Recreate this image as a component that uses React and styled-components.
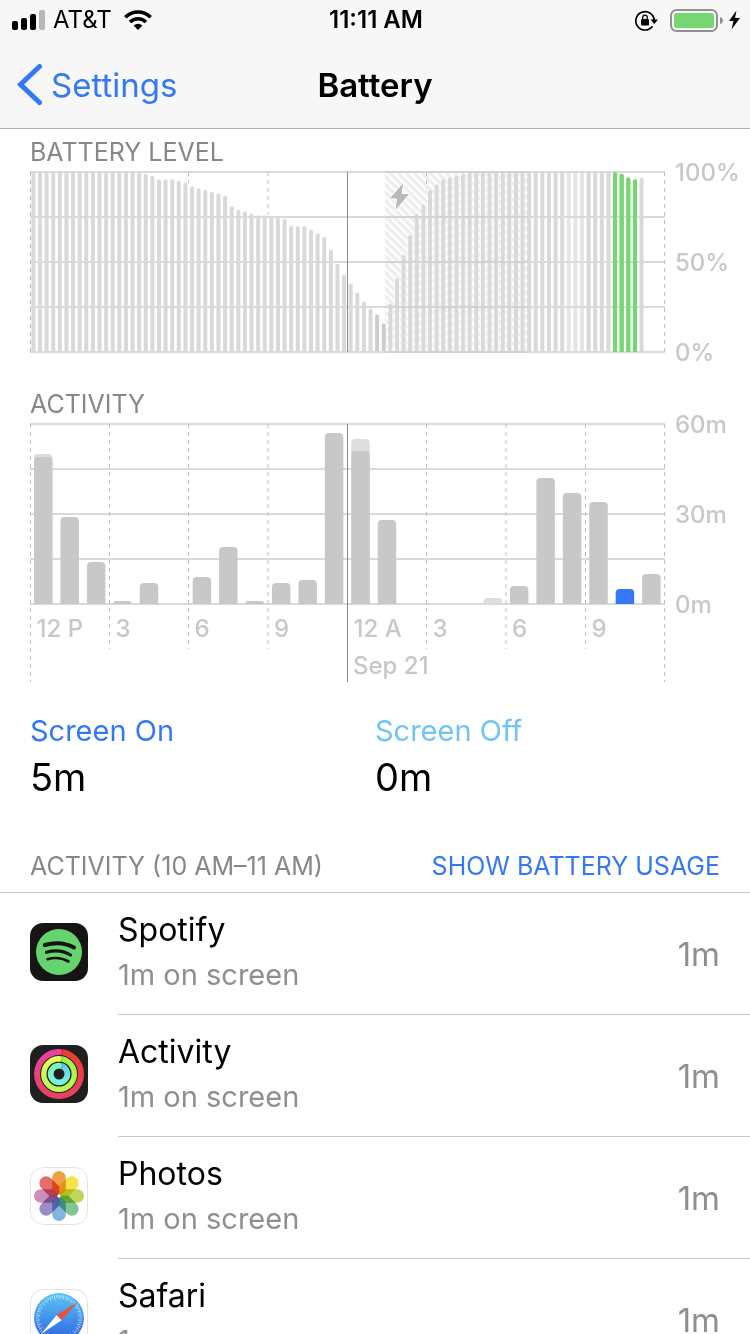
import React from 'react';
import styled, { createGlobalStyle } from 'styled-components';

const GlobalStyle = createGlobalStyle`
  * {
    box-sizing: border-box;
  }
  html {
    scrollbar-width: none;
  }
  body {
    margin: 0;
    background: #fff;
    color: #000;
    font-family: Inter, "Liberation Sans", sans-serif;
  }
`;

const Header = styled.header`
  background: #f7f7f7;
  border-bottom: 1px solid #b2b2b2;
`;

const StatusBar = styled.div`
  display: grid;
  grid-template-columns: 1fr auto 1fr;
  align-items: center;
  height: 40px;
  padding: 0 10px 0 12px;
  font-size: 24px;
  line-height: 28px;
`;

const StatusGroup = styled.div`
  display: flex;
  align-items: center;
  justify-content: ${props => props.$end ? 'flex-end' : 'flex-start'};
  gap: ${props => props.$gap}px;
`;

const Clock = styled.span`
  font-weight: 600;
`;

const NavBar = styled.nav`
  display: grid;
  grid-template-columns: 1fr auto 1fr;
  align-items: center;
  height: 88px;
  padding: 2px 16px 0;
`;

const BackLink = styled.a`
  display: flex;
  align-items: center;
  gap: 8px;
  color: #3478f6;
  font-size: 33px;
  line-height: 40px;
  text-decoration: none;
`;

const Title = styled.h1`
  margin: 0;
  font-size: 33px;
  line-height: 40px;
  font-weight: 600;
`;

const Section = styled.section`
  padding: ${props => props.$top}px 0 0 30px;
`;

const Label = styled.h2`
  margin: 0;
  color: #86868b;
  font-size: 25px;
  line-height: 32px;
  font-weight: 400;
`;

const ChartSvg = styled.svg`
  display: block;
  width: 100%;
  height: auto;
  margin-top: 3px;
  overflow: visible;

  text {
    fill: #c7c7cc;
    font-size: 24px;
    font-weight: 500;
  }
`;

const Totals = styled.dl`
  display: grid;
  grid-template-columns: 345px 1fr;
  margin: 0;
  padding: 26px 30px 0;
`;

const TotalName = styled.dt`
  color: ${props => props.$color};
  font-size: 29px;
  line-height: 44px;
`;

const TotalValue = styled.dd`
  margin: 0;
  font-size: 38px;
  line-height: 48px;
`;

const ListHeader = styled.div`
  display: flex;
  align-items: center;
  justify-content: space-between;
  padding: 49px 30px 10px;
  border-bottom: 1px solid #c8c7cc;
`;

const UsageButton = styled.button`
  padding: 0;
  border: 0;
  background: none;
  color: #3478f6;
  font-family: inherit;
  font-size: 25px;
  line-height: 32px;
`;

const AppList = styled.ul`
  margin: 0;
  padding: 0 0 0 30px;
  list-style: none;
`;

const AppRow = styled.li`
  display: flex;
  align-items: flex-start;
  gap: 30px;

  > svg {
    flex: none;
    margin-top: 30px;
  }
`;

const RowBody = styled.div`
  display: flex;
  flex: 1;
  align-items: center;
  justify-content: space-between;
  height: 122px;
  padding-right: 30px;
  border-bottom: 1px solid #c8c7cc;
`;

const RowText = styled.div`
  padding-bottom: 2px;
`;

const AppName = styled.div`
  font-size: 32px;
  line-height: 44px;
`;

const AppDetail = styled.div`
  color: #8e8e93;
  font-size: 29px;
  line-height: 46px;
`;

const AppTime = styled.span`
  color: #8e8e93;
  font-size: 33px;
  line-height: 44px;
`;

// battery percentage for every 15 minutes, starting at noon
const levels = [
  ...Array(17).fill(100),
  99, 98, 96, 96, 96, 95, 94, 92, 91, 90, 89, 88, 87, 81, 79, 78, 77, 76, 76,
  75, 75, 74, 70, 70, 70, 68, 66, 64, 57, 49, 43, 38, 33, 28, 24, 21, 16,
  27, 41, 54, 65, 77, 82, 90, 93, 96, 97, 98, 99,
  ...Array(23).fill(100),
  99, 97, 96, 97,
];

// minutes per hour: screen on, then total with screen off
const activity = [
  [49, 50], [29], [14], [1], [7], [0], [9], [19], [1], [7], [8], [57],
  [51, 55], [28], [0], [0], [0], [0, 2], [6], [42], [37], [34], [5], [10],
];

const SELECTED_HOUR = 22;
const columns = [0.5, 79.5, 158.5, 238, 317.5, 396.5, 476, 555.5, 634.5];
const gridRows = [1, 46, 91, 136, 181];
const hours = ['12 P', '3', '6', '9', '12 A', '3', '6', '9'];

// dashed lines of the battery chart stop where the bars begin
const levelDashes = [
  [0.5, 181], [158.5, 12], [238, 44], [396.5, 18], [634.5, 181],
];

function levelColor(i) {
  if (i >= 88 && i <= 91) return '#76d672';
  if (i === 52 || i === 53) return '#cdcdcd';
  if (i >= 81 && i <= 83) return '#e5e5e5';
  return '#d9d9d9';
}

function barPath(x, width, height, radius) {
  const r = Math.min(radius, height);
  return `M${x} 181v${r - height}q0 ${-r} ${r} ${-r}h${width - 2 * r}q${r} 0 ${r} ${r}v${height - r}z`;
}

function GridRows({ from = 0, to = 635, color = '#dadada' }) {
  return gridRows.map(y => (
    <path key={y} d={`M${from} ${y}H${to}`} stroke={color} strokeWidth="2" />
  ));
}

function BatteryChart() {
  return (
    <ChartSvg viewBox="0 0 720 182" role="img" aria-label="Battery level">
      <defs>
        <pattern id="hatch" width="8" height="8" patternUnits="userSpaceOnUse" x="355" y="1">
          <rect width="8" height="8" fill="#efefef" />
          <path d="M-2 -2L10 10M-2 6L2 10M6 -2L10 2" stroke="#fff" strokeWidth="2" />
        </pattern>
      </defs>
      <rect x="355" y="1" width="143" height="180" fill="url(#hatch)" />
      {levels.map((level, i) => (
        <g key={i}>
          <path d={barPath(0.6 + 6.61 * i, 5.4, level * 1.8, 2)} fill="#fff" fillOpacity="0.6" />
          <path d={barPath(1.4 + 6.61 * i, 4, level * 1.8, 2)} fill={levelColor(i)} />
        </g>
      ))}
      <GridRows />
      <GridRows from={355} to={498} color="#d3d3d3" />
      {levelDashes.map(([x, bottom]) => (
        <path key={x} d={`M${x} 1V${bottom}`} stroke="#c0c0c0" strokeDasharray="4 4" />
      ))}
      {levels.map((level, i) => i >= 88 && i <= 91 && (
        <path key={i} d={barPath(1.4 + 6.61 * i, 4, level * 1.8, 2)} fill={levelColor(i)} />
      ))}
      <path d="M317.5 1V181" stroke="#8c8c8c" />
      <path d="M374 10.500L359 28h7.500L365 40 380 22.500h-8z" fill="#bababa" stroke="#fff" strokeWidth="1" />
      <text x="645" y="10">100%</text>
      <text x="645" y="100">50%</text>
      <text x="645" y="190">0%</text>
    </ChartSvg>
  );
}

function ActivityChart() {
  return (
    <ChartSvg viewBox="0 0 720 260" role="img" aria-label="Activity">
      <GridRows />
      {columns.map((x, i) => (
        <path key={x} d={`M${x} 1V${i % 8 === 0 ? 259 : 226}`} stroke="#c0c0c0" strokeDasharray="4 4" />
      ))}
      {activity.map(([on, total], i) => (
        <g key={i}>
          {total && <path d={barPath(4 + 26.44 * i, 18.500, total * 3, 4)} fill="#dedede" />}
          {on > 0 && (
            <path d={barPath(4 + 26.44 * i, 18.500, on * 3, 4)} fill={i === SELECTED_HOUR ? '#3478f6' : '#c8c8c8'} />
          )}
        </g>
      ))}
      <path d="M317.5 1V259" stroke="#8c8c8c" />
      <text x="645" y="10">60m</text>
      <text x="645" y="100">30m</text>
      <text x="645" y="190">0m</text>
      {hours.map((hour, i) => (
        <text key={i} x={columns[i] + 6} y="214">{hour}</text>
      ))}
      <text x="323" y="251">Sep 21</text>
    </ChartSvg>
  );
}

function SignalIcon() {
  return (
    <svg width="33" height="20" viewBox="0 0 33 20">
      <rect y="11" width="6" height="9" rx="2" />
      <rect x="9" y="8" width="6" height="12" rx="2" />
      <rect x="18" y="4" width="6" height="16" rx="2" />
      <rect x="27" width="6" height="20" rx="2" fill="#b8b8b8" />
    </svg>
  );
}

function WifiIcon() {
  return (
    <svg width="28" height="20" viewBox="0 0 28 20" fill="none" stroke="#000" strokeWidth="3.6">
      <path d="M1.300 7.300A18 18 0 0 1 26.700 7.300" />
      <path d="M6 12A11.300 11.300 0 0 1 22 12" />
      <path d="M14 20L9.600 15.600Q14 11.800 18.400 15.600z" fill="#000" stroke="none" />
    </svg>
  );
}

function RotationLockIcon() {
  return (
    <svg width="23" height="21" viewBox="0 0 23 21">
      <path d="M17.500 16.200A9.200 9.200 0 1 1 19.200 10" fill="none" stroke="#000" strokeWidth="1.700" />
      <path d="M15.500 9.500h7.500l-3.700 4.500z" />
      <rect x="6" y="9" width="8" height="6.500" rx="1" />
      <path d="M7.700 9.500V7.500a2.300 2.300 0 0 1 4.600 0v2" fill="none" stroke="#000" strokeWidth="1.300" />
    </svg>
  );
}

function BatteryIcon() {
  return (
    <svg width="53" height="23" viewBox="0 0 53 23">
      <rect x="1" y="1" width="46" height="21" rx="5.500" fill="none" stroke="#919191" strokeWidth="2" />
      <rect x="4" y="4" width="40" height="15" rx="2.500" fill="#76d672" />
      <path d="M50 8q3 1 3 3.500t-3 3.500z" fill="#919191" />
    </svg>
  );
}

function BoltIcon() {
  return (
    <svg width="11" height="20" viewBox="0 0 11 20">
      <path d="M7.500 0.500L0 11h4.500L2.500 19.500 11 8H6z" />
    </svg>
  );
}

function SpotifyIcon() {
  return (
    <svg width="58" height="58" viewBox="0 0 58 58">
      <rect width="58" height="58" rx="13" fill="#191414" />
      <circle cx="29" cy="29" r="23" fill="#65d46e" />
      <g fill="none" stroke="#191414" strokeLinecap="round">
        <path d="M14.800 22Q31 17.500 44 24.500" strokeWidth="4" />
        <path d="M16.500 29.300Q30 25.500 40.500 32" strokeWidth="3.200" />
        <path d="M17.500 36.200Q29 33 38.500 38.500" strokeWidth="2.600" />
      </g>
    </svg>
  );
}

const rings = [
  { r: 22, width: 6, start: '#ea3d32', mid: '#ea4160', end: '#ea429c' },
  { r: 15.3, width: 5.4, start: '#a5ee4c', mid: '#b9fb4f', end: '#e6fb5c' },
  { r: 8.4, width: 5.8, start: '#66cdf2', mid: '#76f3dc', end: '#7cf5b4' },
];

function ActivityIcon() {
  return (
    <svg width="58" height="58" viewBox="0 0 58 58">
      <rect width="58" height="58" rx="13" fill="#1f1f1f" />
      {rings.map(({ r, width, start, mid, end }, i) => (
        <g key={r} fill="none" strokeWidth={width}>
          <linearGradient id={`ring-r${i}`} gradientUnits="userSpaceOnUse" x1="0" y1={29 - r} x2="0" y2={29 + r}>
            <stop stopColor={start} />
            <stop offset="1" stopColor={mid} />
          </linearGradient>
          <linearGradient id={`ring-l${i}`} gradientUnits="userSpaceOnUse" x1="0" y1={29 - r} x2="0" y2={29 + r}>
            <stop stopColor={end} />
            <stop offset="1" stopColor={mid} />
          </linearGradient>
          <path d={`M29 ${29 - r}a${r} ${r} 0 0 1 0 ${2 * r}`} stroke={`url(#ring-r${i})`} />
          <circle cx="30" cy={29 - r} r={width / 2} fill="#000" fillOpacity="0.25" stroke="none" />
          <path d={`M29.100 ${29 + r}a${r} ${r} 0 0 1 0 ${-2 * r}`} stroke={`url(#ring-l${i})`} />
          <circle cx="29" cy={29 - r} r={width / 2} fill={end} stroke="none" />
        </g>
      ))}
    </svg>
  );
}

const petals = ['#efa047', '#f4e34b', '#bcd759', '#80c494', '#82b4e0', '#9d8cc5', '#ca8fbb', '#e86c6b'];

const Petal = styled.path`
  mix-blend-mode: multiply;
`;

const Flower = styled.g`
  isolation: isolate;
`;

function PhotosIcon() {
  return (
    <svg width="58" height="58" viewBox="0 0 58 58">
      <rect x="0.5" y="0.5" width="57" height="57" rx="13" fill="#fff" stroke="#e3e3e3" />
      <Flower>
        {petals.map((color, i) => (
          <Petal
            key={color}
            d="M22.200 10.800a6.800 6.800 0 0 1 13.600 0v11.700L29 29.300l-6.800-6.800z"
            fill={color}
            transform={`rotate(${i * 45} 29 29)`}
          />
        ))}
      </Flower>
      <circle cx="29" cy="29" r="1.700" fill="#fff" />
    </svg>
  );
}

function SafariIcon() {
  return (
    <svg width="58" height="58" viewBox="0 0 58 58">
      <linearGradient id="compass" x1="0" y1="0" x2="0" y2="1">
        <stop stopColor="#5cc6f4" />
        <stop offset="1" stopColor="#2b5fe3" />
      </linearGradient>
      <rect x="0.5" y="0.5" width="57" height="57" rx="13" fill="#fff" stroke="#e3e3e3" />
      <circle cx="29" cy="29" r="25" fill="url(#compass)" />
      {Array.from({ length: 60 }, (_, i) => (
        <path
          key={i}
          d={`M29 6v${i % 2 ? 2.500 : 4}`}
          stroke="#fff"
          strokeOpacity="0.8"
          strokeWidth="0.7"
          transform={`rotate(${i * 6} 29 29)`}
        />
      ))}
      <path d="M47.500 13L31.600 31.300 26.600 26.300z" fill="#e8503f" />
      <path d="M26.600 26.300L31.600 31.300 11 45z" fill="#fff" />
    </svg>
  );
}

const apps = [
  { name: 'Spotify', Icon: SpotifyIcon },
  { name: 'Activity', Icon: ActivityIcon },
  { name: 'Photos', Icon: PhotosIcon },
  { name: 'Safari', Icon: SafariIcon },
];

export default function App() {
  return (
    <>
      <GlobalStyle />
      <Header>
        <StatusBar>
          <StatusGroup $gap={8}>
            <SignalIcon />
            <StatusGroup $gap={12}>
              <span>AT&amp;T</span>
              <WifiIcon />
            </StatusGroup>
          </StatusGroup>
          <Clock>11:11 AM</Clock>
          <StatusGroup $end $gap={6}>
            <StatusGroup $gap={12}>
              <RotationLockIcon />
              <BatteryIcon />
            </StatusGroup>
            <BoltIcon />
          </StatusGroup>
        </StatusBar>
        <NavBar>
          <BackLink href="#settings">
            <svg width="27" height="42" viewBox="0 0 27 42" fill="none" stroke="#3478f6" strokeWidth="5" strokeLinecap="round">
              <path d="M23.500 2.500L4.500 20.500 23.500 38.500" />
            </svg>
            Settings
          </BackLink>
          <Title>Battery</Title>
        </NavBar>
      </Header>
      <main>
        <Section $top={7}>
          <Label>BATTERY LEVEL</Label>
          <BatteryChart />
        </Section>
        <Section $top={35}>
          <Label>ACTIVITY</Label>
          <ActivityChart />
        </Section>
        <Totals>
          <div>
            <TotalName $color="#3478f6">Screen On</TotalName>
            <TotalValue>5m</TotalValue>
          </div>
          <div>
            <TotalName $color="#70c5f5">Screen Off</TotalName>
            <TotalValue>0m</TotalValue>
          </div>
        </Totals>
        <ListHeader>
          <Label>ACTIVITY (10 AM–11 AM)</Label>
          <UsageButton type="button">SHOW BATTERY USAGE</UsageButton>
        </ListHeader>
        <AppList>
          {apps.map(({ name, Icon }) => (
            <AppRow key={name}>
              <Icon />
              <RowBody>
                <RowText>
                  <AppName>{name}</AppName>
                  <AppDetail>1m on screen</AppDetail>
                </RowText>
                <AppTime>1m</AppTime>
              </RowBody>
            </AppRow>
          ))}
        </AppList>
      </main>
    </>
  );
}
